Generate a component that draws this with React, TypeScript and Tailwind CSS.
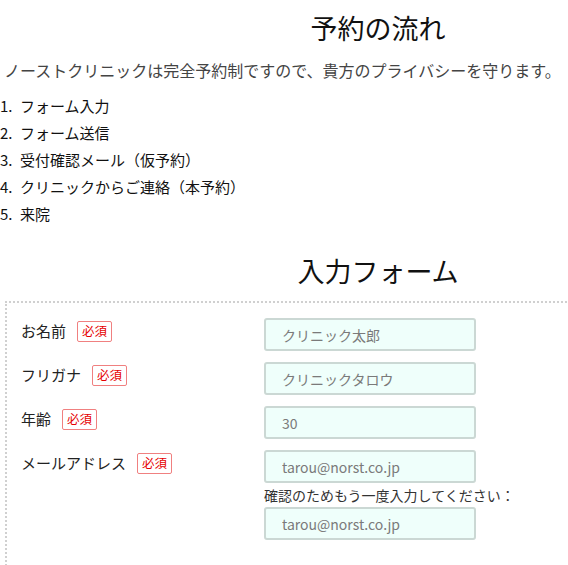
import React from "react";

const font = { fontFamily: '"Noto Sans CJK JP", "Noto Sans", sans-serif' };

function Badge() {
  return (
    <span className="inline-flex h-[21px] w-[35px] items-center justify-center rounded-[2px] border border-[#f08080] text-[12.5px] leading-none text-[#e60000]">
      必須
    </span>
  );
}

function Field({ value }: { value: string }) {
  return (
    <input
      readOnly
      placeholder={value}
      className="box-border block h-[33px] w-[212px] rounded-[3px] border-2 border-[#cbd8d4] bg-[#effffb] px-[16px] text-[14px] text-[#777] outline-none placeholder:text-[#7a7a7a]"
    />
  );
}

function Row({ label, children }: { label: string; children: React.ReactNode }) {
  return (
    <div className="mb-[11px] grid grid-cols-[243px_1fr]">
      <div className="flex h-[27px] items-center gap-[11px] text-[15px] text-[#222]">
        <span>{label}</span>
        <Badge />
      </div>
      <div>{children}</div>
    </div>
  );
}

const steps = [
  "フォーム入力",
  "フォーム送信",
  "受付確認メール（仮予約）",
  "クリニックからご連絡（本予約）",
  "来院",
];

export default function App() {
  return (
    <div className="h-[565px] w-[568px] overflow-hidden bg-white" style={font}>
      <div className="w-[756px]">
        <h2 className="mt-[14px] text-center text-[27px] leading-[27px] text-[#111]">予約の流れ</h2>
        <p className="mt-[17px] pl-[4px] text-[16px] leading-[24px] text-[#444]">
          ノーストクリニックは完全予約制ですので、貴方のプライバシーを守ります。
        </p>
        <ol className="mt-[10px] text-[15px] leading-[27px] text-[#111]">
          {steps.map((s, i) => (
            <li key={s} className="flex">
              <span className="w-[20px]">{i + 1}.</span>
              <span>{s}</span>
            </li>
          ))}
        </ol>
        <h2 className="mt-[24px] text-center text-[27px] leading-[40px] text-[#111]">入力フォーム</h2>
        <div className="ml-[5px] mt-[10px] h-[400px] w-[746px] border-2 border-dotted border-[#d0d0d0] pl-[14px] pt-[15px]">
          <Row label="お名前">
            <Field value="クリニック太郎" />
          </Row>
          <Row label="フリガナ">
            <Field value="クリニックタロウ" />
          </Row>
          <Row label="年齢">
            <Field value="30" />
          </Row>
          <Row label="メールアドレス">
            <Field value="tarou@norst.co.jp" />
            <div className="text-[14px] leading-[24px] text-[#333]">確認のためもう一度入力してください：</div>
            <Field value="tarou@norst.co.jp" />
          </Row>
        </div>
      </div>
    </div>
  );
}
